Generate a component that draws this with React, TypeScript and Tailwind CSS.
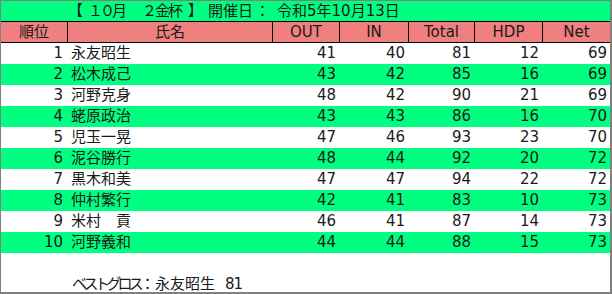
const rows = [
  { rank: 1, name: '永友昭生', out: 41, inn: 40, total: 81, hdp: 12, net: 69 },
  { rank: 2, name: '松木成己', out: 43, inn: 42, total: 85, hdp: 16, net: 69 },
  { rank: 3, name: '河野克身', out: 48, inn: 42, total: 90, hdp: 21, net: 69 },
  { rank: 4, name: '蛯原政治', out: 43, inn: 43, total: 86, hdp: 16, net: 70 },
  { rank: 5, name: '児玉一晃', out: 47, inn: 46, total: 93, hdp: 23, net: 70 },
  { rank: 6, name: '泥谷勝行', out: 48, inn: 44, total: 92, hdp: 20, net: 72 },
  { rank: 7, name: '黒木和美', out: 47, inn: 47, total: 94, hdp: 22, net: 72 },
  { rank: 8, name: '仲村繁行', out: 42, inn: 41, total: 83, hdp: 10, net: 73 },
  { rank: 9, name: '米村\u3000貢', out: 46, inn: 41, total: 87, hdp: 14, net: 73 },
  { rank: 10, name: '河野義和', out: 44, inn: 44, total: 88, hdp: 15, net: 73 },
];

const headers = ['順位', '氏名', 'OUT', 'IN', 'Total', 'HDP', 'Net'];

const App = () => {
  return (
    <div
      className="w-[612px] h-[294px] bg-white border-[#808080] border-t border-l border-r-2 border-b-2 text-[15px] text-[#1a1a1a]"
      style={{ fontFamily: '"DejaVu Sans", "Noto Sans CJK JP", sans-serif' }}
    >
      {/* Title */}
      <div className="flex h-[20px] bg-[#00ff80] pl-[67px] leading-[20px] whitespace-pre">
        <span className="w-[20px]">【</span>
        <span className="w-[54px] tracking-[-3px]">１０月</span>
        <span className="w-[46px] tracking-[-2px]">２金杯</span>
        <span className="w-[20px]">】</span>
        <span className="w-[47px]">開催日</span>
        <span className="w-[22px]">：</span>
        <span>令和5年10月13日</span>
      </div>

      {/* Header */}
      <div className="grid grid-cols-[67px_205px_67px_69px_66px_68px_67px] h-[22px] bg-[#f08080] border-y border-black leading-[20px]">
        {headers.map((h, i) => (
          <div key={h} className={`text-center ${i < headers.length - 1 ? 'border-r border-black' : ''}`}>
            {h}
          </div>
        ))}
      </div>

      {/* Rows */}
      {rows.map((r, i) => (
        <div
          key={r.rank}
          className={`grid grid-cols-[67px_205px_67px_69px_66px_68px_67px] h-[21px] leading-[21px] ${i % 2 === 1 ? 'bg-[#00ff80]' : 'bg-white'}`}
        >
          <div className="text-right pr-[5px]">{r.rank}</div>
          <div className="pl-[3px]">{r.name}</div>
          <div className="text-right pr-[4px]">{r.out}</div>
          <div className="text-right pr-[4px]">{r.inn}</div>
          <div className="text-right pr-[4px]">{r.total}</div>
          <div className="text-right pr-[4px]">{r.hdp}</div>
          <div className="text-right pr-[3px]">{r.net}</div>
        </div>
      ))}

      {/* Footer */}
      <div className="flex pl-[71px] pt-[22px] leading-[18px] whitespace-pre">
        <span className="w-[68px] tracking-[-3.7px]">ベストグロス</span>
        <span className="w-[15px]">：</span>
        <span className="w-[70px]">永友昭生</span>
        <span className="tracking-[-1px]">81</span>
      </div>
    </div>
  );
};

export default App;
